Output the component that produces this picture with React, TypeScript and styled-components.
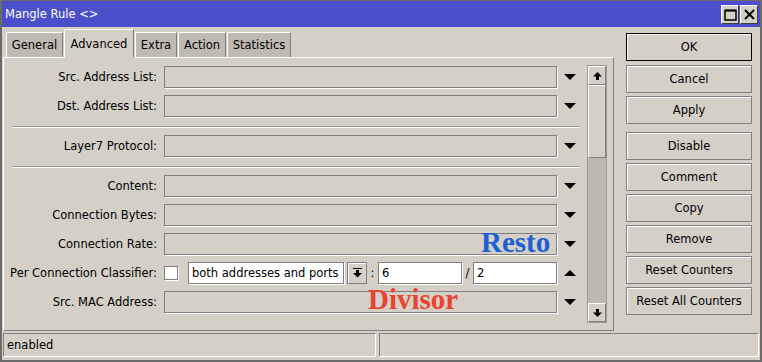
import React from "react";
import styled, { createGlobalStyle, css } from "styled-components";

const GlobalStyle = createGlobalStyle`
  html, body {
    margin: 0;
    padding: 0;
    background: #d4d0c8;
  }
  body {
    font-family: "DejaVu Sans", "Liberation Sans", sans-serif;
    font-size: 11.5px;
    color: #000;
  }
  * {
    box-sizing: border-box;
  }
`;

const raised = css`
  border: 1px solid #808080;
  box-shadow: inset 1px 1px 0 #fff;
`;

const sunken = css`
  border: 1px solid #808080;
  box-shadow: 1px 1px 0 #fff;
`;

const Window = styled.div`
  position: relative;
  width: 762px;
  height: 362px;
  display: flex;
  flex-direction: column;
  background: #d4d0c8;
  border-style: solid;
  border-color: #6b6b6b;
  border-width: 1px 2px 2px 2px;
  overflow: hidden;
`;

const TitleBar = styled.div`
  height: 26px;
  flex-shrink: 0;
  display: flex;
  align-items: center;
  justify-content: space-between;
  padding: 0 2px 0 3px;
  background: #4b4fc9;
`;

const TitleText = styled.div`
  color: #fff;
  font-size: 11.5px;
  padding-bottom: 1px;
`;

const TitleButtons = styled.div`
  display: flex;
  gap: 1px;
  margin-top: 1px;
`;

const TitleButton = styled.div`
  width: 18px;
  height: 19px;
  display: flex;
  align-items: center;
  justify-content: center;
  background: #d4d0c8;
  border-top: 1px solid #fff;
  border-left: 1px solid #fff;
  border-right: 1px solid #404040;
  border-bottom: 1px solid #404040;
`;

const Main = styled.div`
  height: 305px;
  flex-shrink: 0;
  display: flex;
`;

const LeftColumn = styled.div`
  width: 611px;
  margin-left: 1px;
  display: flex;
  flex-direction: column;
`;

const Tabs = styled.div`
  height: 30px;
  display: flex;
  align-items: flex-end;
  padding-left: 3px;
`;

const Tab = styled.div<{ $w: number; $active?: boolean }>`
  position: relative;
  width: ${(p) => p.$w}px;
  height: ${(p) => (p.$active ? 29 : 25)}px;
  margin-bottom: ${(p) => (p.$active ? -1 : 0)}px;
  margin-right: 1px;
  z-index: ${(p) => (p.$active ? 2 : 0)};
  display: flex;
  align-items: center;
  justify-content: center;
  padding-bottom: ${(p) => (p.$active ? 1 : 0)}px;
  background: ${(p) => (p.$active ? "#d4d0c8" : "#bfbbb3")};
  border-top: 1px solid #fff;
  border-left: 1px solid #fff;
  border-right: 1px solid #808080;
`;

const Panel = styled.div`
  height: 274px;
  display: flex;
  border-top: 1px solid #fff;
  border-left: 1px solid #fff;
  border-right: 1px solid #808080;
  border-bottom: 1px solid #808080;
`;

const Form = styled.div`
  flex: 1;
  display: flex;
  flex-direction: column;
  gap: 7px;
  padding-top: 8px;
`;

const Row = styled.div`
  height: 22px;
  display: flex;
  align-items: center;
  flex-shrink: 0;
`;

const Label = styled.div`
  width: 154px;
  margin-right: 6px;
  padding-right: 1px;
  text-align: right;
  white-space: nowrap;
  flex-shrink: 0;
`;

const Field = styled.div<{ $w: number; $white?: boolean }>`
  ${sunken};
  width: ${(p) => p.$w}px;
  height: 22px;
  flex-shrink: 0;
  display: flex;
  align-items: center;
  padding-left: 3px;
  white-space: nowrap;
  overflow: hidden;
  background: ${(p) => (p.$white ? "#fff" : "#d4d0c8")};
`;

const Checkbox = styled.div`
  ${sunken};
  width: 14px;
  height: 14px;
  margin-right: 10px;
  background: #fff;
  flex-shrink: 0;
`;

const DropButton = styled.div`
  ${raised};
  width: 20px;
  height: 22px;
  margin-left: 3px;
  display: flex;
  align-items: center;
  justify-content: center;
  flex-shrink: 0;
`;

const Joiner = styled.div`
  width: 11px;
  text-align: center;
  flex-shrink: 0;
`;

const ArrowCell = styled.div`
  width: 26px;
  display: flex;
  justify-content: center;
  flex-shrink: 0;
`;

const Separator = styled.div`
  width: 568px;
  height: 2px;
  margin: 2px 0 0 8px;
  border-top: 1px solid #a09c94;
  border-bottom: 1px solid #fff;
  flex-shrink: 0;
`;

const ScrollBar = styled.div`
  width: 20px;
  margin: 7px 6px 7px 0;
  display: flex;
  flex-direction: column;
  border: 1px solid #a09c94;
  background: #bdb9b1;
`;

const ScrollButton = styled.div`
  height: 19px;
  display: flex;
  align-items: center;
  justify-content: center;
  background: #d4d0c8;
  border-top: 1px solid #fff;
  border-left: 1px solid #fff;
  border-right: 1px solid #808080;
  border-bottom: 1px solid #808080;
  flex-shrink: 0;
`;

const Thumb = styled.div`
  height: 73px;
  background: #d4d0c8;
  border-top: 1px solid #fff;
  border-left: 1px solid #fff;
  border-right: 1px solid #808080;
  border-bottom: 1px solid #808080;
  flex-shrink: 0;
`;

const Track = styled.div`
  flex: 1;
`;

const ButtonColumn = styled.div`
  flex: 1;
  display: flex;
  flex-direction: column;
  gap: 3px;
  padding: 6px 0 0 12px;
`;

const Button = styled.div<{ $default?: boolean; $group?: boolean }>`
  ${raised};
  width: 126px;
  height: 28px;
  display: flex;
  align-items: center;
  justify-content: center;
  flex-shrink: 0;
  border-color: ${(p) => (p.$default ? "#000" : "#808080")};
  margin-bottom: ${(p) => (p.$default ? 1 : 0)}px;
  margin-top: ${(p) => (p.$group ? 5 : 0)}px;
`;

const StatusBar = styled.div`
  flex: 1;
  display: flex;
  gap: 3px;
  padding: 1px 1px 3px 1px;
`;

const StatusPane = styled.div<{ $w?: number }>`
  ${(p) => (p.$w ? `width: ${p.$w}px;` : "flex: 1;")}
  display: flex;
  align-items: center;
  padding-left: 3px;
  border-top: 1px solid #808080;
  border-left: 1px solid #808080;
  border-right: 1px solid #fff;
  border-bottom: 1px solid #fff;
`;

const Note = styled.div<{ $color: string }>`
  position: absolute;
  font-family: "Liberation Serif", serif;
  font-weight: bold;
  font-size: 29px;
  line-height: 29px;
  color: ${(p) => p.$color};
  white-space: nowrap;
`;

const Down = () => (
  <svg width="12" height="6" viewBox="0 0 12 6">
    <polygon points="0,0 12,0 6,6" fill="#000" />
  </svg>
);

const Up = () => (
  <svg width="12" height="6" viewBox="0 0 12 6">
    <polygon points="0,6 12,6 6,0" fill="#000" />
  </svg>
);

const StemArrow = ({ up }: { up?: boolean }) => (
  <svg width="9" height="8" viewBox="0 0 9 8" style={up ? undefined : { transform: "rotate(180deg)" }}>
    <polygon points="4.5,0 9,4.5 6,4.5 6,8 3,8 3,4.5 0,4.5" fill="#000" />
  </svg>
);

const DropIcon = () => (
  <svg width="9" height="10" viewBox="0 0 9 10">
    <rect x="0" y="0" width="9" height="1" fill="#000" />
    <polygon points="3,2 6,2 6,5 9,5 4.5,9.5 0,5 3,5" fill="#000" />
  </svg>
);

type FieldRow = { label: string };

const topRows: FieldRow[] = [{ label: "Src. Address List:" }, { label: "Dst. Address List:" }];
const midRows: FieldRow[] = [
  { label: "Content:" },
  { label: "Connection Bytes:" },
  { label: "Connection Rate:" },
];

const buttons = [
  "OK",
  "Cancel",
  "Apply",
  "Disable",
  "Comment",
  "Copy",
  "Remove",
  "Reset Counters",
  "Reset All Counters",
];

function PlainRow({ label }: FieldRow) {
  return (
    <Row>
      <Label>{label}</Label>
      <Field $w={393} />
      <ArrowCell>
        <Down />
      </ArrowCell>
    </Row>
  );
}

export default function App() {
  return (
    <>
      <GlobalStyle />
      <Window>
        <TitleBar>
          <TitleText>Mangle Rule &lt;&gt;</TitleText>
          <TitleButtons>
            <TitleButton>
              <svg width="13" height="12" viewBox="0 0 13 12">
                <rect x="1" y="1.5" width="11" height="9.5" fill="none" stroke="#000" strokeWidth="1.5" />
                <rect x="1" y="0.5" width="11" height="2" fill="#000" />
              </svg>
            </TitleButton>
            <TitleButton>
              <svg width="11" height="11" viewBox="0 0 11 11">
                <path d="M1 1 L10 10 M10 1 L1 10" stroke="#000" strokeWidth="2" />
              </svg>
            </TitleButton>
          </TitleButtons>
        </TitleBar>

        <Main>
          <LeftColumn>
            <Tabs>
              <Tab $w={57}>General</Tab>
              <Tab $w={70} $active>
                Advanced
              </Tab>
              <Tab $w={42}>Extra</Tab>
              <Tab $w={48}>Action</Tab>
              <Tab $w={64}>Statistics</Tab>
            </Tabs>
            <Panel>
              <Form>
                {topRows.map((r) => (
                  <PlainRow key={r.label} {...r} />
                ))}
                <Separator />
                <PlainRow label="Layer7 Protocol:" />
                <Separator />
                {midRows.map((r) => (
                  <PlainRow key={r.label} {...r} />
                ))}
                <Row>
                  <Label>Per Connection Classifier:</Label>
                  <Checkbox />
                  <Field $w={156} $white>
                    both addresses and ports
                  </Field>
                  <DropButton>
                    <DropIcon />
                  </DropButton>
                  <Joiner>:</Joiner>
                  <Field $w={84} $white>
                    6
                  </Field>
                  <Joiner>/</Joiner>
                  <Field $w={84} $white>
                    2
                  </Field>
                  <ArrowCell>
                    <Up />
                  </ArrowCell>
                </Row>
                <PlainRow label="Src. MAC Address:" />
              </Form>
              <ScrollBar>
                <ScrollButton>
                  <StemArrow up />
                </ScrollButton>
                <Thumb />
                <Track />
                <ScrollButton>
                  <StemArrow />
                </ScrollButton>
              </ScrollBar>
            </Panel>
          </LeftColumn>

          <ButtonColumn>
            {buttons.map((b) => (
              <Button key={b} $default={b === "OK"} $group={b === "Disable"}>
                {b}
              </Button>
            ))}
          </ButtonColumn>
        </Main>

        <StatusBar>
          <StatusPane $w={373}>enabled</StatusPane>
          <StatusPane />
        </StatusBar>

        <Note $color="#1d5fd3" style={{ left: 479, top: 227 }}>
          Resto
        </Note>
        <Note $color="#e8442f" style={{ left: 366, top: 284 }}>
          Divisor
        </Note>
      </Window>
    </>
  );
}
